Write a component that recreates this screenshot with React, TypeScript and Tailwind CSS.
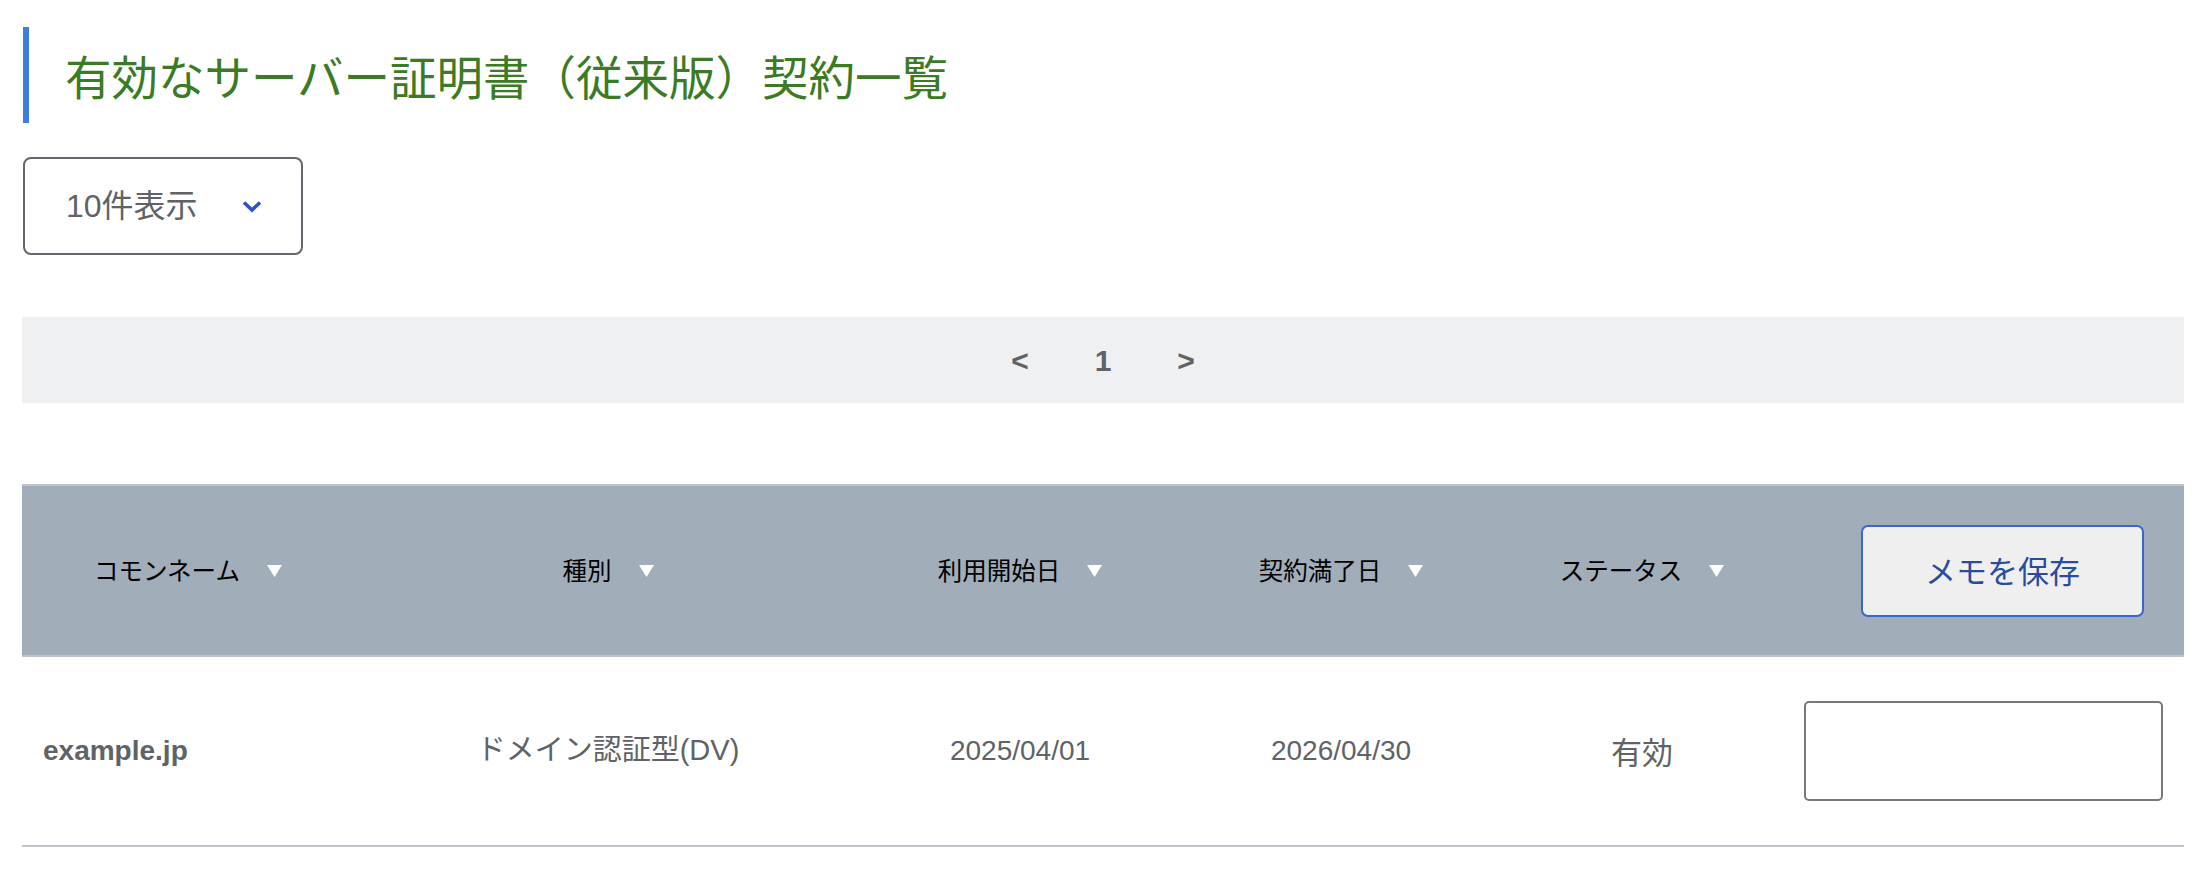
import React from 'react';

const font = 'font-["Liberation_Sans","Noto_Sans_CJK_JP",sans-serif]';
const cjk = 'font-["Noto_Sans_CJK_JP","Liberation_Sans",sans-serif]';

const SortMark = () => (
  <svg width="15" height="12" viewBox="0 0 15 12" className="shrink-0">
    <polygon points="0,0 15,0 7.5,12" fill="#ffffff" />
  </svg>
);

const HeaderCell = ({ label }: { label: string }) => (
  <div className="flex items-center justify-center gap-[27px]">
    <span className={`${cjk} text-[24.5px] text-black`}>{label}</span>
    <SortMark />
  </div>
);

const App: React.FC = () => {
  return (
    <div className={`${font} bg-white min-h-screen w-full px-[22px] pt-[27px]`}>
      {/* title */}
      <div className="border-l-[6px] border-[#3d7fdc] h-[96px] flex items-center pl-[36px] ml-px">
        <h1 className={`${cjk} text-[46.5px] leading-none text-[#3b7b24]`}>
          有効なサーバー証明書（従来版）契約一覧
        </h1>
      </div>

      {/* page size select */}
      <div className="mt-[34px] ml-px w-[280px] h-[98px] border-2 border-[#64676d] rounded-[8px] flex items-center pl-[41px] pr-[39px] justify-between">
        <span className="text-[32px] text-[#5f6368]">10件表示</span>
        <svg width="20" height="13" viewBox="0 0 20 13">
          <polyline points="2,2.5 10,10 18,2.5" fill="none" stroke="#2d51cf" strokeWidth="3.6" />
        </svg>
      </div>

      {/* pagination */}
      <div className="mt-[62px] h-[86px] bg-[#eef0f2] flex items-center justify-center gap-[66px] text-[30px] font-bold text-[#5f6368]">
        <span>&lt;</span>
        <span>1</span>
        <span>&gt;</span>
      </div>

      {/* table */}
      <div className="mt-[81px]">
        <div className="grid grid-cols-[332px_508px_316px_326px_276px_1fr] h-[173px] bg-[#a1adb8] border-t-2 border-b-2 border-[#bcc3cc] items-center">
          <HeaderCell label="コモンネーム" />
          <HeaderCell label="種別" />
          <HeaderCell label="利用開始日" />
          <HeaderCell label="契約満了日" />
          <HeaderCell label="ステータス" />
          <div className="pl-[81px]">
            <button className={`${cjk} w-[283px] h-[92px] bg-[#efefef] border-2 border-[#3b67c9] rounded-[7px] text-[31px] text-[#2a4c9f]`}>
              メモを保存
            </button>
          </div>
        </div>
        <div className="grid grid-cols-[332px_508px_316px_326px_276px_1fr] h-[190px] border-b-2 border-[#c0c4cc] items-center text-[28px] text-[#5f6368]">
          <div className="pl-[21px] font-bold">example.jp</div>
          <div className="text-center text-[29px]">ドメイン認証型(DV)</div>
          <div className="text-center">2025/04/01</div>
          <div className="text-center">2026/04/30</div>
          <div className={`${cjk} text-center text-[31px]`}>有効</div>
          <div className="pl-[24px] pr-[21px]">
            <input className="w-full h-[100px] border-2 border-[#76787c] rounded-[5px] bg-white outline-none" />
          </div>
        </div>
      </div>
    </div>
  );
};

export default App;
